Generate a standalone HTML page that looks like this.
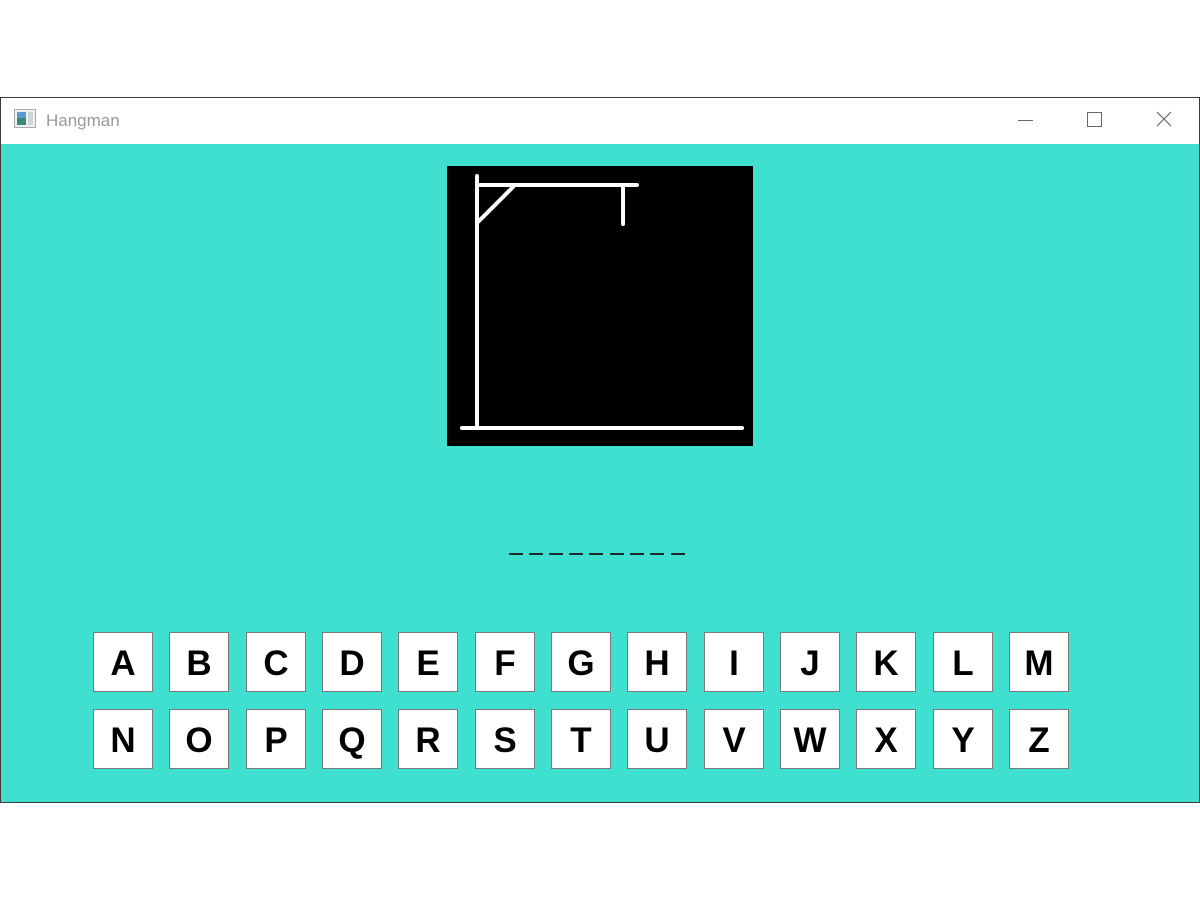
<!DOCTYPE html>
<html><head><style>
html,body{margin:0;padding:0;background:#fff;width:1200px;height:900px;overflow:hidden;position:relative;font-family:"Liberation Sans",sans-serif}
.win{position:absolute;left:0;top:97px;width:1198px;height:704px;border:1px solid #3a3a3a;background:#40E0D0}
.tb{position:absolute;left:0;top:0;width:1198px;height:46px;background:#fff}
.title{position:absolute;left:45px;top:13px;font-size:17px;color:#999}
.btn{position:absolute;width:58px;height:58px;background:#fff;border:1px solid #7a7a7a;font-weight:bold;font-size:35px;line-height:62px;text-align:center;color:#000;font-family:"Liberation Sans",sans-serif}
.dash{position:absolute;top:553px;width:14px;height:2px;background:#1a2a2a}
</style></head><body>
<div class="win">
 <div class="tb">
  <svg style="position:absolute;left:13px;top:11px" width="22" height="20" viewBox="0 0 22 20">
   <rect x="0.5" y="0.5" width="21" height="18" fill="#f0f0f0" stroke="#aaa"/>
   <rect x="3" y="3" width="9" height="13" fill="#3a8a7a"/><rect x="3" y="3" width="9" height="6" fill="#5a9ad0"/>
   <rect x="14" y="3" width="5" height="13" fill="#cfd8d0"/>
  </svg>
  <div class="title">Hangman</div>
  <div style="position:absolute;left:1017px;top:22px;width:15px;height:1px;background:#666"></div>
  <div style="position:absolute;left:1086px;top:14px;width:13px;height:13px;border:1px solid #666"></div>
  <svg style="position:absolute;left:1155px;top:13px" width="16" height="16"><path d="M1 1L15 15M15 1L1 15" stroke="#666" stroke-width="1.2"/></svg>
 </div>
</div>
<svg style="position:absolute;left:447px;top:166px" width="306" height="280" viewBox="447 166 306 280">
 <rect x="447" y="166" width="306" height="280" fill="#000"/>
 <g stroke="#fff" stroke-width="4" stroke-linecap="round" fill="none">
  <line x1="477" y1="176" x2="477" y2="428"/>
  <line x1="477" y1="185" x2="637" y2="185"/>
  <line x1="623" y1="185" x2="623" y2="224"/>
  <line x1="513" y1="187" x2="478" y2="222"/>
  <line x1="462" y1="428" x2="742" y2="428"/>
 </g>
</svg>
<div class="dash" style="left:509px"></div><div class="dash" style="left:529px"></div><div class="dash" style="left:549px"></div><div class="dash" style="left:569px"></div><div class="dash" style="left:589px"></div><div class="dash" style="left:610px"></div><div class="dash" style="left:630px"></div><div class="dash" style="left:650px"></div><div class="dash" style="left:671px"></div>
<div id="k"></div>
<script>
var s="ABCDEFGHIJKLMNOPQRSTUVWXYZ",h="";
for(var i=0;i<26;i++){var c=i%13,r=Math.floor(i/13);
h+='<div class="btn" style="left:'+Math.round(93+c*76.33)+'px;top:'+(632+r*77)+'px">'+s[i]+'</div>';}
document.getElementById("k").innerHTML=h;
</script>
</body></html>
